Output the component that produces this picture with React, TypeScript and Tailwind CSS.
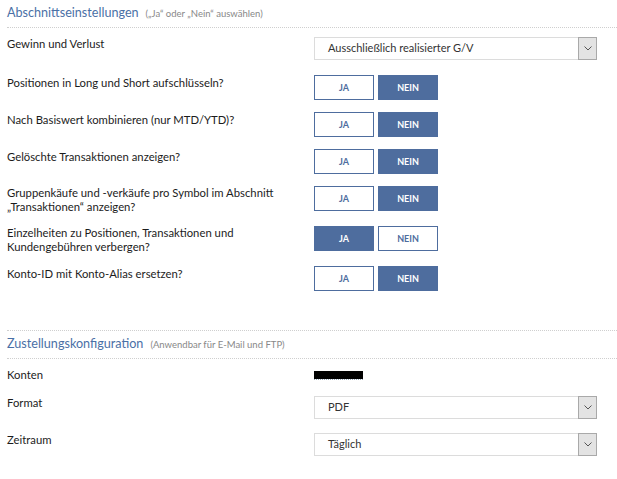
import React from "react";

const BLUE = "bg-[#4e6d9e]";

function Select({ value }: { value: string }) {
  return (
    <div className="flex h-[23px] w-[283px] items-stretch border border-[#dcdcdc] bg-white">
      <div className="flex flex-1 items-center pl-[13px] text-[11px] text-[#333]">{value}</div>
      <div className="my-[-1px] mr-[-1px] flex w-[19px] items-center justify-center border border-[#a9a9a9] bg-[#e3e3e3]">
        <svg width="8" height="5" viewBox="0 0 8 5" fill="none">
          <path d="M0.5 0.5 L4 4 L7.5 0.5" stroke="#555" strokeWidth="1" />
        </svg>
      </div>
    </div>
  );
}

function Toggle({ ja }: { ja: boolean }) {
  const on = `${BLUE} text-white border border-[#4e6d9e]`;
  const off = "bg-white text-[#4e6d9e] border border-[#4e6d9e]";
  return (
    <div className="flex gap-[4px]">
      <div className={`flex h-[25px] w-[60px] items-center justify-center text-[9px] font-bold ${ja ? on : off}`}>JA</div>
      <div className={`flex h-[25px] w-[60px] items-center justify-center text-[9px] font-bold ${ja ? off : on}`}>NEIN</div>
    </div>
  );
}

function Row({ label, children, pt = "pt-[1px]" }: { label: React.ReactNode; children: React.ReactNode; pt?: string }) {
  return (
    <div className="flex items-start">
      <div className={`w-[307px] pr-4 text-[11.3px] leading-[14px] text-[#1c1c1c] ${pt}`}>{label}</div>
      <div>{children}</div>
    </div>
  );
}

function Heading({ title, sub }: { title: string; sub: string }) {
  return (
    <div className="flex h-[28px] items-center gap-[7px] border-b border-dotted border-[#cfcfcf]">
      <span className="text-[12.6px] text-[#4a70a6]">{title}</span>
      <span className="pt-[2px] text-[9.5px] text-[#888]">{sub}</span>
    </div>
  );
}

export default function App() {
  return (
    <div className="h-[479px] w-[617px] overflow-hidden bg-white pl-[7px]" style={{ fontFamily: "Lato, 'Liberation Sans', sans-serif" }}>
      <Heading title="Abschnittseinstellungen" sub={"(„Ja\u201C oder „Nein\u201C auswählen)"} />
      <div className="flex flex-col gap-3 pt-[9px]">
        <Row label="Gewinn und Verlust" pt="pt-0">
          <Select value="Ausschließlich realisierter G/V" />
        </Row>
        <div className="mt-[3px]">
          <Row label="Positionen in Long und Short aufschlüsseln?">
            <Toggle ja={false} />
          </Row>
        </div>
        <Row label="Nach Basiswert kombinieren (nur MTD/YTD)?">
          <Toggle ja={false} />
        </Row>
        <Row label="Gelöschte Transaktionen anzeigen?">
          <Toggle ja={false} />
        </Row>
        <Row label={<>Gruppenkäufe und -verkäufe pro Symbol im Abschnitt<br />{"„Transaktionen\u201C anzeigen?"}</>} pt="pt-0">
          <Toggle ja={false} />
        </Row>
        <Row label={<>Einzelheiten zu Positionen, Transaktionen und<br />Kundengebühren verbergen?</>} pt="pt-0">
          <Toggle ja={true} />
        </Row>
        <Row label="Konto-ID mit Konto-Alias ersetzen?">
          <Toggle ja={false} />
        </Row>
      </div>
      <div className="mt-[39px] border-t border-dotted border-[#cfcfcf]" />
      <Heading title="Zustellungskonfiguration" sub="(Anwendbar für E-Mail und FTP)" />
      <div className="flex flex-col pt-[9px]">
        <Row label="Konten" pt="pt-0">
          <div className="flex h-[14px] items-center">
            <div className="relative h-[8px] w-[49px] bg-black">
              <div className="absolute left-0 top-[8px] h-[1px] w-[49px] border-b border-dotted border-[#9ab]" />
            </div>
          </div>
        </Row>
        <div className="mt-[14px]">
          <Row label="Format" pt="pt-0">
            <Select value="PDF" />
          </Row>
        </div>
        <div className="mt-[14px]">
          <Row label="Zeitraum" pt="pt-0">
            <Select value="Täglich" />
          </Row>
        </div>
      </div>
    </div>
  );
}
